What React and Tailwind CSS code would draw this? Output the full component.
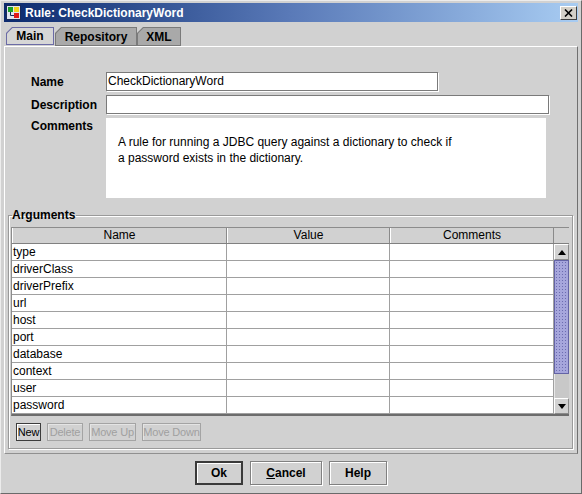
import React from "react";

function Tab({ label, w, selected }) {
  return (
    <div
      className={`${w} ${selected ? "h-[18px] bg-[#6b6ba6]" : "h-[19px] bg-[#7a7a7a]"} p-px [clip-path:polygon(6px_0,100%_0,100%_100%,0_100%,0_6px)]`}
    >
      <div
        className={`h-full flex items-center justify-center text-[12px] font-bold ${selected ? "bg-[#d6d6d6]" : "bg-[#a9a9a9]"} [clip-path:polygon(5.5px_0,100%_0,100%_100%,0_100%,0_5.5px)]`}
      >
        {label}
      </div>
    </div>
  );
}

function SmallBtn({ label, w, enabled }) {
  return (
    <div
      className={`${w} h-[18px] flex items-center justify-center whitespace-nowrap text-[11px] tracking-[-0.2px] border ${
        enabled
          ? "border-[#3c3c3c] text-black shadow-[inset_1px_1px_0_#ffffff]"
          : "border-[#a4a4a4] text-[#a0a0a0] shadow-[inset_1px_1px_0_#e4e4e4]"
      }`}
    >
      {label}
    </div>
  );
}

function ArrowBtn({ up }) {
  return (
    <div className="h-[16px] bg-[#d2d2d2] border-t border-l border-t-white border-l-white border-b border-r border-b-[#8a8a8a] border-r-[#8a8a8a] flex items-center justify-center">
      <svg width="8" height="5" viewBox="0 0 8 5">
        {up ? <path d="M0 5 L4 0 L8 5 Z" fill="#000" /> : <path d="M0 0 L8 0 L4 5 Z" fill="#000" />}
      </svg>
    </div>
  );
}

export default function App() {
  const rows = ["type", "driverClass", "driverPrefix", "url", "host", "port", "database", "context", "user", "password"];
  return (
    <div className="w-[582px] h-[494px] bg-[#d1d1d1] font-['Liberation_Sans',Arial,sans-serif] text-black flex flex-col border border-t-[#ececec] border-l-[#ececec] border-r-[#6a6a6a] border-b-[#6a6a6a] px-[3px] pt-[2px] overflow-hidden">
      {/* Title bar */}
      <div className="h-[19px] flex items-center bg-linear-to-r from-[#0c2a6e] via-[#5a7ab8] to-[#a8ccf2] pl-[2px] pr-[1px]">
        <svg width="15" height="15" viewBox="0 0 15 15" className="shrink-0">
          <rect x="0.5" y="0.5" width="14" height="14" fill="#dfe4ee" stroke="#1a2a5a" />
          <rect x="2" y="2" width="5" height="5" fill="#1aa028" />
          <rect x="8" y="2" width="5" height="5" fill="#f2d21a" />
          <rect x="8" y="8" width="5" height="5" fill="#e01818" />
          <path d="M4.5 7 V10.5 H8" stroke="#1a2a5a" fill="none" />
        </svg>
        <span className="ml-[4px] text-white font-bold text-[12px] leading-none">Rule: CheckDictionaryWord</span>
        <div className="ml-auto w-[17px] h-[14px] bg-[#d4d0c8] border border-t-white border-l-white border-r-[#404040] border-b-[#404040] flex items-center justify-center">
          <svg width="9" height="8" viewBox="0 0 9 8">
            <path d="M1 0.5 L8 7.5 M8 0.5 L1 7.5" stroke="#000" strokeWidth="1.6" />
          </svg>
        </div>
      </div>

      {/* Tabs */}
      <div className="mt-[4px] h-[20px] flex items-end pl-[2px]">
        <div className="mb-px">
          <Tab label="Main" w="w-[48px]" selected />
        </div>
        <div className="ml-px">
          <Tab label="Repository" w="w-[82px]" />
        </div>
        <Tab label="XML" w="w-[44px]" />
      </div>

      {/* Panel */}
      <div className="border-t border-l border-t-white border-l-white border-r border-b border-r-[#707070] border-b-[#909090] pt-[25px]">
        <div className="flex flex-col gap-[4px] pl-[26px]">
          <div className="flex items-center h-[19px]">
            <div className="w-[75px] text-[12px] font-bold">Name</div>
            <div className="w-[332px] h-[19px] bg-white border border-[#7a7a7a] shadow-[1px_1px_0_#ffffff] text-[12px] leading-[17px] pl-[1px]">
              CheckDictionaryWord
            </div>
          </div>
          <div className="flex items-center h-[19px]">
            <div className="w-[75px] text-[12px] font-bold">Description</div>
            <div className="w-[443px] h-[19px] bg-white border border-[#7a7a7a] shadow-[1px_1px_0_#ffffff]" />
          </div>
          <div className="flex h-[80px]">
            <div className="w-[75px] text-[12px] font-bold leading-[17px]">Comments</div>
            <div className="w-[440px] h-[80px] bg-white pl-[12px] pt-[16px] text-[12px] leading-[16px]">
              A rule for running a JDBC query against a dictionary to check if
              <br />a password exists in the dictionary.
            </div>
          </div>
        </div>

        {/* Arguments group */}
        <fieldset className="mt-[10px] ml-[3px] mr-[4px] mb-[4px] border border-[#9a9a9a] shadow-[inset_1px_1px_0_#ffffff,1px_1px_0_#ffffff] px-[2px] pt-[5px] pb-[7px]">
          <legend className="ml-[1px] text-[12px] font-bold leading-[14px] pr-[1px]">Arguments</legend>
          <div className="w-[558px] flex border-l border-t border-[#8c8c8c] border-b-2 border-b-[#6c6c6c] bg-white">
            <div className="w-[542px] flex flex-col">
              <div className="grid grid-cols-[215px_163px_164px] h-[16px] bg-[#d1d1d1] border-b border-[#808080]">
                {["Name", "Value", "Comments"].map((h) => (
                  <div
                    key={h}
                    className="border-l border-l-white border-r border-r-[#8a8a8a] text-[12px] leading-[15px] text-center"
                  >
                    {h}
                  </div>
                ))}
              </div>
              {rows.map((r) => (
                <div key={r} className="grid grid-cols-[215px_163px_164px] h-[17px]">
                  <div className="border-r border-b border-[#a0a0a0] text-[12px] leading-[16px] pl-[1px]">{r}</div>
                  <div className="border-r border-b border-[#a0a0a0]" />
                  <div className="border-r border-b border-[#a0a0a0]" />
                </div>
              ))}
            </div>
            <div className="w-[16px] flex flex-col bg-[#cacaca]">
              <div className="h-[16px] bg-[#d1d1d1] border-b border-[#808080]" />
              <ArrowBtn up />
              <div className="h-[114px] bg-[#a6a6dc] bg-[radial-gradient(#6c6cb0_0.7px,transparent_0.9px)] bg-[length:3px_3px] border border-[#6464a6]" />
              <div className="h-[24px] bg-[#c8c8c8] border-l border-[#e8e8e8]" />
              <ArrowBtn />
            </div>
          </div>
          <div className="mt-[7px] flex gap-[6px] pl-[5px]">
            <SmallBtn label="New" w="w-[25px]" enabled />
            <SmallBtn label="Delete" w="w-[36px]" />
            <SmallBtn label="Move Up" w="w-[47px]" />
            <SmallBtn label="Move Down" w="w-[59px]" />
          </div>
        </fieldset>
      </div>

      {/* Bottom buttons */}
      <div className="mt-[7px] flex justify-center gap-[7px]">
        <div className="w-[48px] h-[24px] border-2 border-[#3a3a3a] shadow-[inset_1px_1px_0_#ffffff] flex items-center justify-center text-[12px] font-bold">
          Ok
        </div>
        <div className="w-[72px] h-[24px] border border-[#808080] shadow-[inset_1px_1px_0_#ffffff,1px_1px_0_#ffffff] flex items-center justify-center text-[12px] font-bold">
          <span>
            <span className="underline">C</span>ancel
          </span>
        </div>
        <div className="w-[58px] h-[24px] border border-[#808080] shadow-[inset_1px_1px_0_#ffffff,1px_1px_0_#ffffff] flex items-center justify-center text-[12px] font-bold">
          Help
        </div>
      </div>
    </div>
  );
}
